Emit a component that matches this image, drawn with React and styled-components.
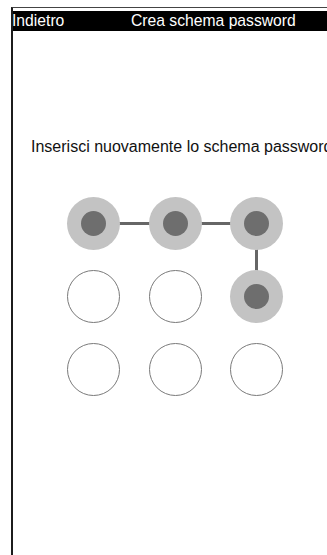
import React from "react";
import styled, { createGlobalStyle } from "styled-components";

const Global = createGlobalStyle`
  html, body { margin: 0; padding: 0; background: #fff; overflow: hidden; }
  body { font-family: "Liberation Sans", Arial, sans-serif; }
`;

const Frame = styled.div`
  margin: 7px 0 0 11px;
  height: calc(100vh - 7px);
  border-left: 2px solid #1c1c1c;
  border-top: 1px solid #444;
  box-sizing: border-box;
  overflow: hidden;
`;

const Header = styled.div`
  margin: 3px 0 0 -5px;
  height: 20px;
  background: #000;
  color: #fff;
  display: flex;
  align-items: center;
  padding-left: 4px;
  font-size: 15.7px;
  white-space: nowrap;
`;

const Back = styled.span`
  width: 119px;
  flex: none;
`;

const Title = styled.span``;

const Prompt = styled.div`
  margin-top: 107px;
  padding-left: 18px;
  font-size: 16px;
  line-height: 18px;
  color: #111;
  white-space: nowrap;
`;

const Pad = styled.div`
  position: relative;
  margin: 41px 0 0 54px;
  display: grid;
  grid-template-columns: repeat(3, 53px);
  grid-auto-rows: 53px;
  column-gap: 28.5px;
  row-gap: 20px;
  width: max-content;
`;

const Dot = styled.div`
  position: relative;
  z-index: 1;
  width: 53px;
  height: 53px;
  border-radius: 50%;
  box-sizing: border-box;
  display: flex;
  align-items: center;
  justify-content: center;
  background: ${(p) => (p.$on ? "#c3c3c3" : "#fff")};
  border: ${(p) => (p.$on ? "none" : "1.5px solid #7a7a7a")};
`;

const Core = styled.div`
  width: 25px;
  height: 25px;
  border-radius: 50%;
  background: #6e6e6e;
`;

const Lines = styled.svg`
  position: absolute;
  left: 0;
  top: 0;
  z-index: 0;
  overflow: visible;
`;

const active = [0, 1, 2, 5];
const center = (i) => {
  const c = i % 3;
  const r = Math.floor(i / 3);
  return [26.5 + c * 81.5, 26.5 + r * 73];
};

export default function App() {
  const pts = active.map(center);
  return (
    <>
      <Global />
      <Frame>
        <Header>
          <Back>Indietro</Back>
          <Title>Crea schema password</Title>
        </Header>
        <Prompt>Inserisci nuovamente lo schema password</Prompt>
        <Pad>
          <Lines width="216" height="200">
            <polyline
              points={pts.map((p) => p.join(",")).join(" ")}
              fill="none"
              stroke="#666"
              strokeWidth="3"
            />
          </Lines>
          {Array.from({ length: 9 }, (_, i) => (
            <Dot key={i} $on={active.includes(i)}>
              {active.includes(i) && <Core />}
            </Dot>
          ))}
        </Pad>
      </Frame>
    </>
  );
}
